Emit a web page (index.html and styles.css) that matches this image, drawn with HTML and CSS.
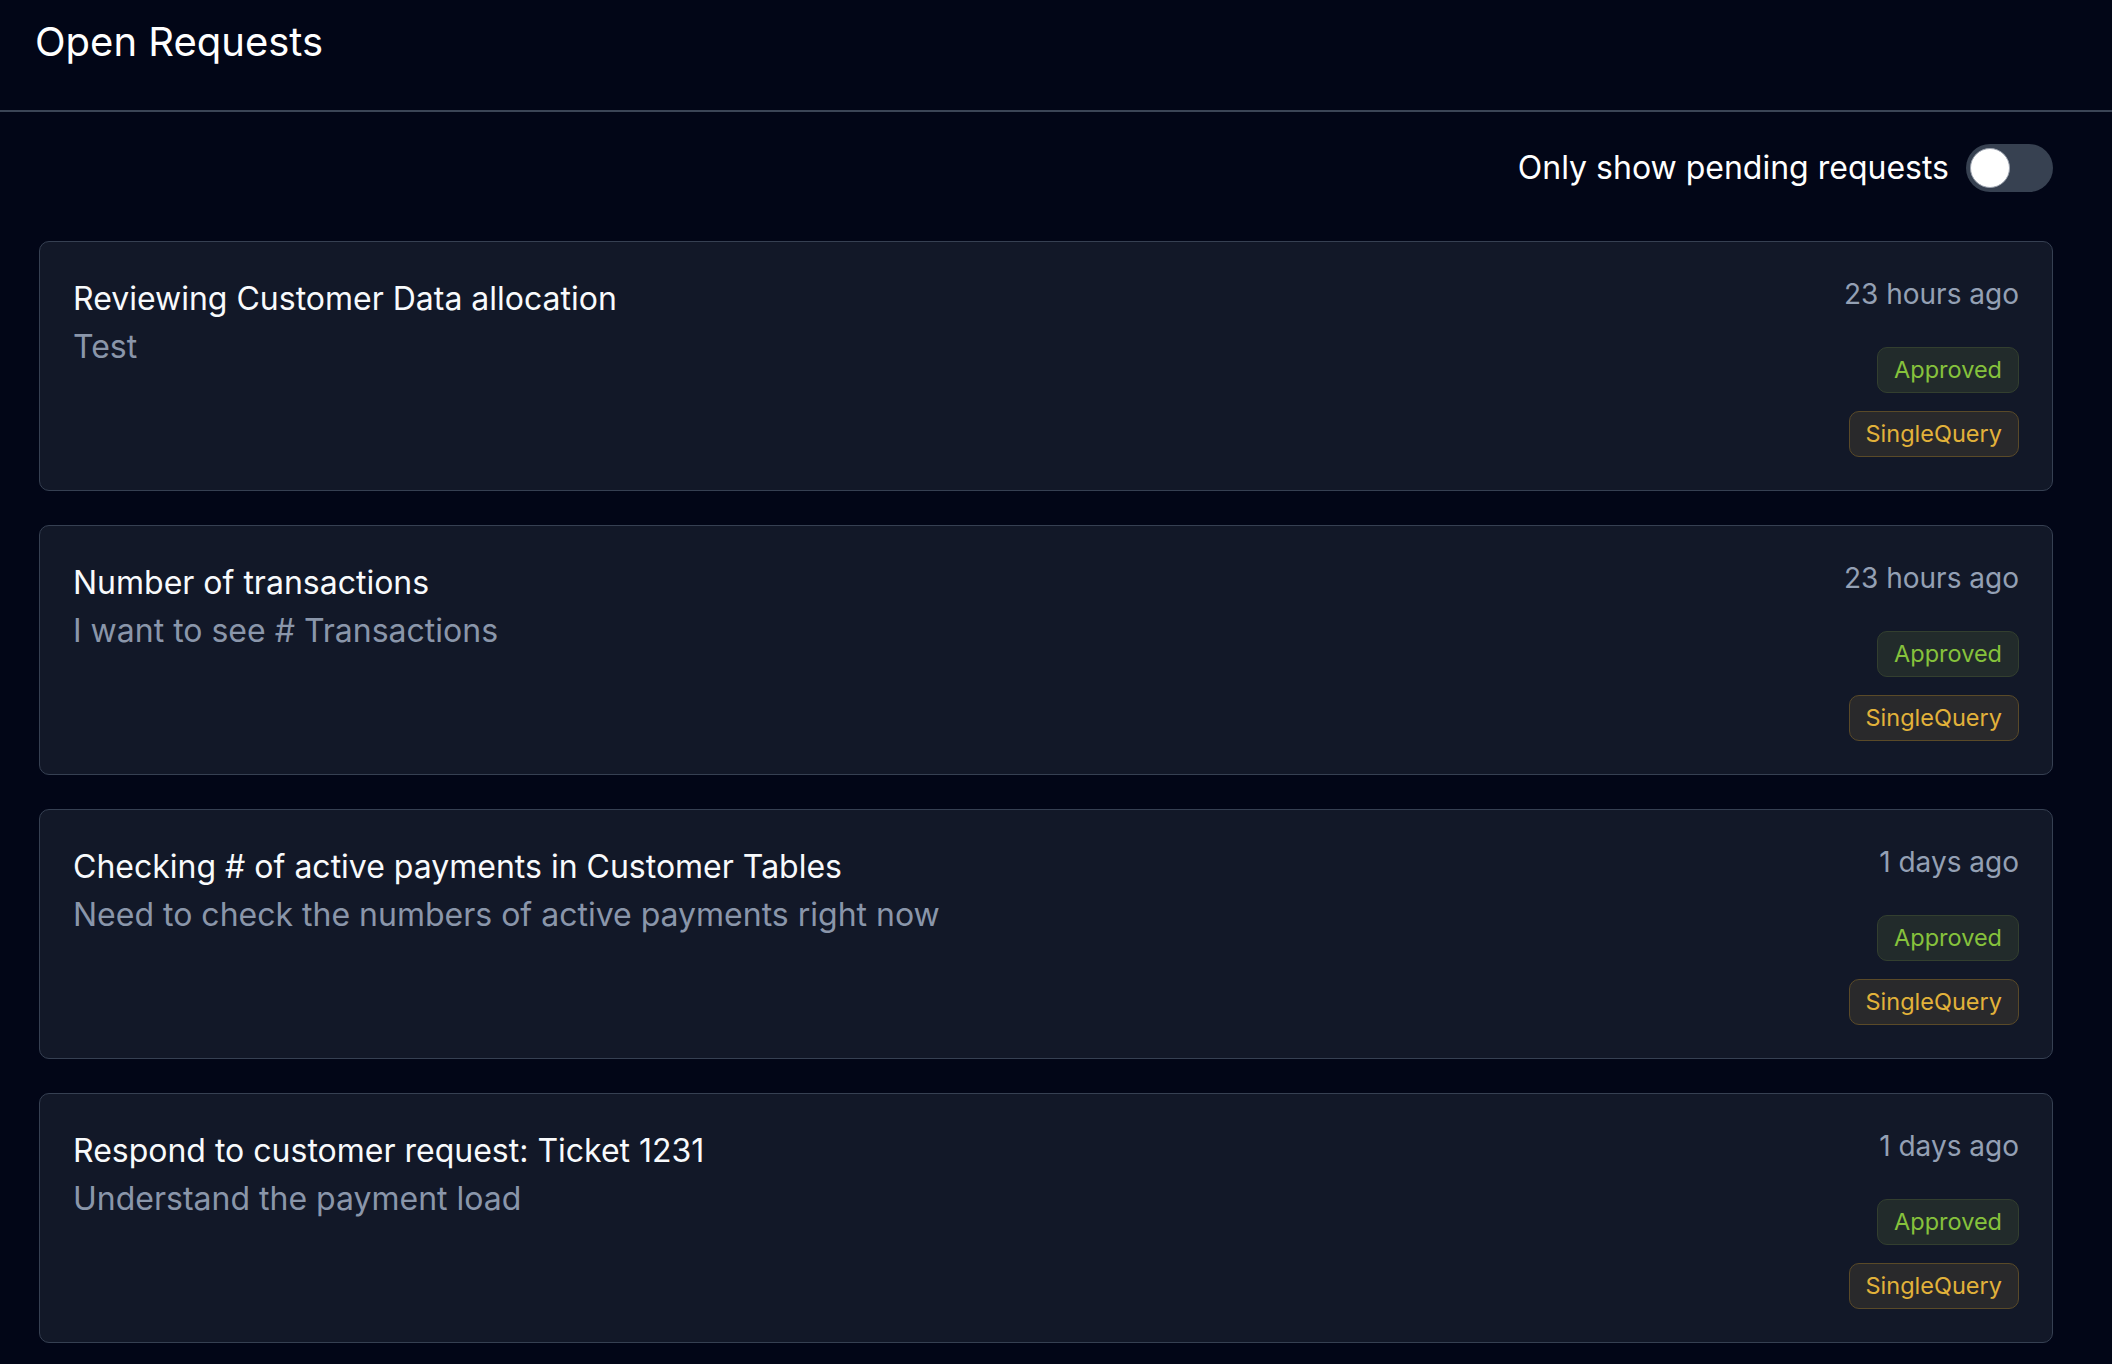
FILE: index.html
```html
<!DOCTYPE html>
<html lang="en">
<head>
<meta charset="utf-8">
<title>Open Requests</title>
<link rel="stylesheet" href="styles.css">
</head>
<body>
<header class="page-header">
  <h1 class="page-title">Open Requests</h1>
</header>
<main class="content">
  <div class="filter-row">
    <span class="filter-label">Only show pending requests</span>
    <span class="toggle"><span class="toggle-knob"></span></span>
  </div>
  <div class="card-list">
    <div class="card">
      <div class="card-main">
        <div class="card-title">Reviewing Customer Data allocation</div>
        <div class="card-desc">Test</div>
      </div>
      <div class="card-side">
        <div class="card-time">23 hours ago</div>
        <div class="badges">
          <span class="badge badge-approved">Approved</span>
          <span class="badge badge-type">SingleQuery</span>
        </div>
      </div>
    </div>
    <div class="card">
      <div class="card-main">
        <div class="card-title">Number of transactions</div>
        <div class="card-desc">I want to see # Transactions</div>
      </div>
      <div class="card-side">
        <div class="card-time">23 hours ago</div>
        <div class="badges">
          <span class="badge badge-approved">Approved</span>
          <span class="badge badge-type">SingleQuery</span>
        </div>
      </div>
    </div>
    <div class="card">
      <div class="card-main">
        <div class="card-title">Checking # of active payments in Customer Tables</div>
        <div class="card-desc">Need to check the numbers of active payments right now</div>
      </div>
      <div class="card-side">
        <div class="card-time">1 days ago</div>
        <div class="badges">
          <span class="badge badge-approved">Approved</span>
          <span class="badge badge-type">SingleQuery</span>
        </div>
      </div>
    </div>
    <div class="card">
      <div class="card-main">
        <div class="card-title">Respond to customer request: Ticket 1231</div>
        <div class="card-desc">Understand the payment load</div>
      </div>
      <div class="card-side">
        <div class="card-time">1 days ago</div>
        <div class="badges">
          <span class="badge badge-approved">Approved</span>
          <span class="badge badge-type">SingleQuery</span>
        </div>
      </div>
    </div>
  </div>
</main>
</body>
</html>
```
FILE: styles.css
```css
* { box-sizing: border-box; }
html, body {
  margin: 0;
  padding: 0;
  background: #020617;
  font-family: Inter, "Noto Sans", sans-serif;
  color: #f1f5f9;
}
body { min-height: 1364px; overflow: hidden; }

.page-header {
  height: 112px;
  padding: 18px 35px 0;
  border-bottom: 2px solid #3b4556;
}
.page-title {
  margin: 0;
  font-size: 40px;
  line-height: 48px;
  font-weight: 400;
  color: #ffffff;
}

.content {
  padding: 32px 59px 0 39px;
}

.filter-row {
  display: flex;
  justify-content: flex-end;
  align-items: center;
  gap: 17px;
  height: 48px;
}
.filter-label {
  font-size: 32px;
  line-height: 40px;
  color: #ffffff;
}
.toggle {
  width: 87px;
  height: 48px;
  border-radius: 24px;
  background: #374151;
  padding: 4px;
  display: flex;
  align-items: center;
}
.toggle-knob {
  width: 40px;
  height: 40px;
  border-radius: 50%;
  background: #ffffff;
  border: 1px solid #9ca3af;
}

.card-list {
  margin-top: 49px;
  display: flex;
  flex-direction: column;
  gap: 34px;
}
.card {
  display: flex;
  justify-content: space-between;
  height: 250px;
  padding: 33px 33px 32px 33px;
  background: #121828;
  border: 1px solid #364052;
  border-radius: 10px;
}
.card-main {
  display: flex;
  flex-direction: column;
}
.card-title {
  font-size: 32px;
  line-height: 48px;
  color: #f8fafc;
}
.card-desc {
  font-size: 32px;
  line-height: 48px;
  color: #8a96aa;
}
.card-side {
  display: flex;
  flex-direction: column;
  align-items: flex-end;
}
.card-time {
  font-size: 28px;
  line-height: 38px;
  color: #94a0b4;
}
.badges {
  margin-top: 34px;
  display: flex;
  flex-direction: column;
  align-items: flex-end;
  gap: 18px;
}
.badge {
  display: inline-block;
  height: 46px;
  padding: 6px 16px;
  font-size: 23.5px;
  line-height: 32px;
  border-radius: 10px;
  border: 1px solid;
}
.badge-approved {
  background: #222b2b;
  border-color: #333f2f;
  color: #86c23c;
}
.badge-type {
  background: #29292b;
  border-color: #5a4a28;
  color: #e2b23a;
}
```
